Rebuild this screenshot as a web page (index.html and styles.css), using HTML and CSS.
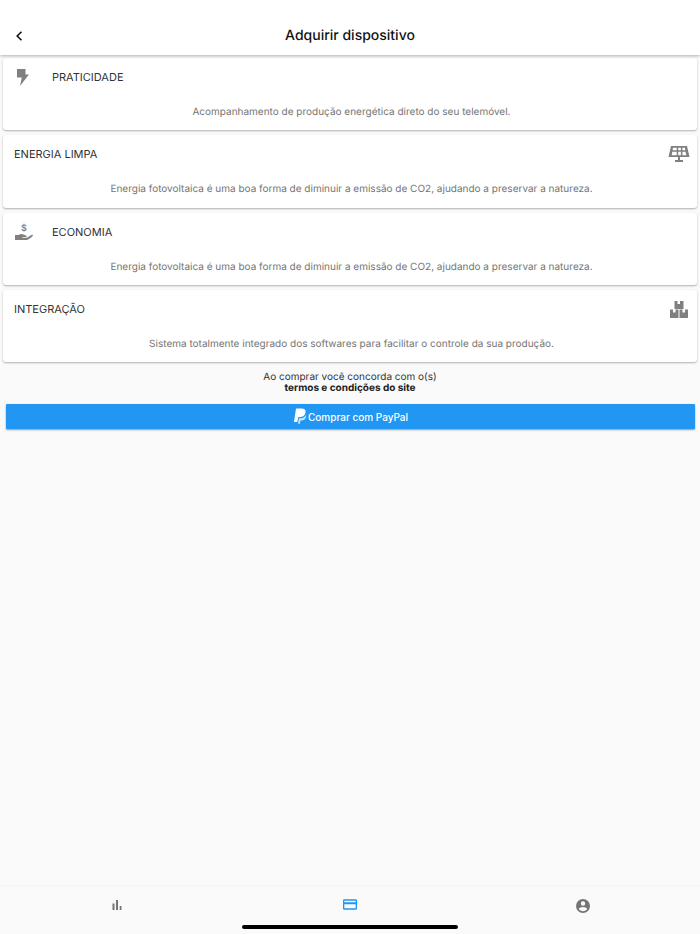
FILE: index.html
```html
<!DOCTYPE html>
<html lang="pt">
<head>
<meta charset="utf-8">
<title>Adquirir dispositivo</title>
<link rel="stylesheet" href="styles.css">
</head>
<body>
<div class="app">
  <header class="topbar">
    <svg class="back" viewBox="0 0 10 12" width="10" height="12"><path d="M7.500 1.800 3.200 6l4.300 4.200" fill="none" stroke="#111" stroke-width="1.600"/></svg>
    <h1 class="title">Adquirir dispositivo</h1>
  </header>
  <main class="content">
    <section class="card">
      <div class="card-head">
        <svg class="icon icon-left icon-bolt" viewBox="0 0 16 20" width="16" height="20"><path d="M3 2h8.500v5.500H15L6 19l1.800-8.500H3z" fill="#808080"/></svg>
        <span class="card-title">PRATICIDADE</span>
      </div>
      <p class="card-text">Acompanhamento de produção energética direto do seu telemóvel.</p>
    </section>
    <section class="card">
      <div class="card-head">
        <span class="card-title">ENERGIA LIMPA</span>
        <svg class="icon icon-right icon-solar" viewBox="0 0 22 18" width="22" height="18"><path fill-rule="evenodd" d="M3 1h16l2.500 11H.5zM5 2.800l-.4 2.400H8.700V2.800zm5.200 0v2.400h2.700V2.800zm4.200 0v2.400h3l-.5-2.400zM4.300 6.700l-.6 3.500H8.700V6.700zm5.900 0v3.500h2.700V6.700zm4.200 0v3.500h3.900l-.8-3.500zM10 12h2v3h3v2H7v-2h3z" fill="#808080"/></svg>
      </div>
      <p class="card-text">Energia fotovoltaica é uma boa forma de diminuir a emissão de CO2, ajudando a preservar a natureza.</p>
    </section>
    <section class="card">
      <div class="card-head">
        <svg class="icon icon-left" viewBox="0 0 20 20" width="20" height="20"><path d="M1 13h3.500c1.500-1.200 3.500-1.500 5-.6l2.500 1c1 .4.8 1.600-.3 1.600H8.500v.7h3.700c1 0 1.500-.3 2.300-.9l3.300-2c.8-.3 1.500.5.900 1.100-1.600 1.700-3.600 3.100-5.700 4.100H1z" fill="#808080"/><text class="dollar" x="10" y="9" text-anchor="middle">$</text></svg>
        <span class="card-title">ECONOMIA</span>
      </div>
      <p class="card-text">Energia fotovoltaica é uma boa forma de diminuir a emissão de CO2, ajudando a preservar a natureza.</p>
    </section>
    <section class="card">
      <div class="card-head">
        <span class="card-title">INTEGRAÇÃO</span>
        <svg class="icon icon-right" viewBox="0 0 20 18" width="20" height="18"><path fill-rule="evenodd" d="M5.500 1h3v3h2.500V1h3.500v8h-9zM1 9.500h3v3h2.500v-3h3V18H1zM10.500 9.500h3v3H16v-3h3V18h-8.500z" fill="#808080"/></svg>
      </div>
      <p class="card-text">Sistema totalmente integrado dos softwares para facilitar o controle da sua produção.</p>
    </section>
    <p class="terms">Ao comprar você concorda com o(s)<br><strong>termos e condições do site</strong></p>
    <button class="buy" type="button">
      <svg viewBox="0 0 14 17" width="14" height="17"><path d="M3 .5h5.500c3 0 4.500 1.500 4 4-.5 3-2.600 4.500-5.500 4.500H5.300L4.300 14H1z" fill="#fff"/><path d="M5 15.800 6 10.300h1.800c2.500 0 4.500-1.200 5.200-3.500.8 1.800-.4 5.600-4.200 5.700H7.500l-.6 3.300z" fill="#fff" opacity=".75"/></svg>
      <span>Comprar com PayPal</span>
    </button>
  </main>
  <nav class="tabbar">
    <div class="tab">
      <svg viewBox="0 0 12 12" width="12" height="12"><path d="M1.500 4.500h2V11h-2zM5 1h2v10H5zM8.700 7h1.800v4H8.700z" fill="#757575"/></svg>
    </div>
    <div class="tab">
      <svg viewBox="0 0 16 12" width="14" height="11"><path fill-rule="evenodd" d="M1.500 0h13c.8 0 1.500.7 1.500 1.500v9c0 .8-.7 1.500-1.500 1.500h-13C.7 12 0 11.300 0 10.500v-9C0 .7.700 0 1.500 0zm0 1.800V3.500h13V1.800zm0 4v4.400h13V5.800z" fill="#2196f3"/></svg>
    </div>
    <div class="tab">
      <svg viewBox="0 0 14 14" width="14" height="14"><path fill-rule="evenodd" d="M7 0a7 7 0 1 1 0 14A7 7 0 0 1 7 0zm0 2.300a2.200 2.200 0 1 0 0 4.400 2.200 2.200 0 0 0 0-4.400zM7 12.200c1.800 0 3.300-.9 4.200-2.200C11.100 8.700 8.500 8 7 8s-4.100.7-4.200 2c.9 1.300 2.400 2.200 4.200 2.200z" fill="#757575"/></svg>
    </div>
    <div class="home-indicator"></div>
  </nav>
</div>
</body>
</html>
```

FILE: styles.css
```css
* {
  box-sizing: border-box;
}

html,
body {
  margin: 0;
  padding: 0;
}

body {
  font-family: Inter, "Noto Sans", sans-serif;
  background: #fafafa;
  color: #212121;
  text-rendering: geometricPrecision;
}

.app {
  display: flex;
  flex-direction: column;
  width: 700px;
  height: 934px;
  overflow: hidden;
}

.topbar {
  position: relative;
  z-index: 2;
  display: flex;
  align-items: flex-end;
  justify-content: center;
  flex: none;
  height: 55px;
  padding-bottom: 9px;
  background: #fff;
  box-shadow: 0 1px 3px rgba(0, 0, 0, 0.3);
}

.back {
  position: absolute;
  left: 14px;
  top: 30px;
}

.title {
  margin: 0;
  font-size: 14px;
  line-height: 20px;
  font-weight: 500;
  color: #111;
}

.content {
  flex: 1;
  display: flex;
  flex-direction: column;
  padding: 3px 3px 0;
}

.card {
  height: 72.300px;
  margin-bottom: 5px;
  padding: 0 8px 0 11px;
  background: #fff;
  border-radius: 3px;
  box-shadow: 0 1px 2px rgba(0, 0, 0, 0.3);
}

.card-head {
  display: flex;
  align-items: center;
  height: 38px;
}

.icon-left {
  flex: none;
  margin-right: 18px;
}

.icon-bolt {
  margin-right: 22px;
}

.icon-right {
  flex: none;
  margin-left: auto;
}

.icon-solar {
  margin-right: -1px;
}

.card-title {
  font-size: 11px;
  line-height: 16px;
  color: #333;
}

.card-text {
  margin: 8px 0 0;
  font-size: 10px;
  line-height: 16px;
  text-align: center;
  color: #757575;
}

.dollar {
  font-family: Inter, sans-serif;
  font-size: 9px;
  font-weight: 600;
  fill: #808080;
}

.terms {
  margin: 5px 0 0;
  font-size: 10px;
  line-height: 11px;
  text-align: center;
  color: #333;
}

.terms strong {
  font-weight: 700;
  color: #212121;
}

.buy {
  display: flex;
  align-items: center;
  justify-content: center;
  gap: 1px;
  width: 689px;
  height: 25px;
  margin: 10px 0 0 3px;
  padding: 0;
  border: 0;
  border-radius: 1px;
  background: #2196f3;
  color: #fff;
  font: 500 10px Inter, sans-serif;
  box-shadow: 0 1px 2px rgba(0, 0, 0, 0.4);
}

.tabbar {
  position: relative;
  display: flex;
  flex: none;
  height: 49px;
  padding-top: 13px;
  border-top: 1px solid #f4f4f4;
}

.tab {
  flex: 1;
  display: flex;
  justify-content: center;
  align-items: flex-start;
}

.home-indicator {
  position: absolute;
  left: 242px;
  bottom: 5px;
  width: 216px;
  height: 4px;
  border-radius: 2px;
  background: #000;
}
```
